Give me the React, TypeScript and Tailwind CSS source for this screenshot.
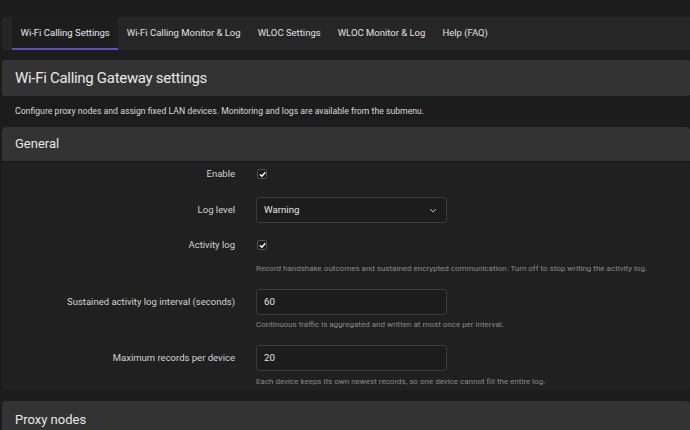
import React from "react";

const font = { fontFamily: "Roboto, 'Open Sans', Arial, sans-serif" };

function Check() {
  return (
    <div className="w-[10px] h-[10px] rounded-[2.5px] border border-[#555555] bg-[#1a1a1a] flex items-center justify-center">
      <svg width="7" height="7" viewBox="0 0 10 10">
        <path d="M1.8 5.4 L4.2 7.6 L8.4 2.6" fill="none" stroke="#fff" strokeWidth="2" strokeLinecap="round" strokeLinejoin="round" />
      </svg>
    </div>
  );
}

function Label({ children }: { children: React.ReactNode }) {
  return <div className="w-[233px] shrink-0 text-right text-[9.5px] text-[#d2d2d2]">{children}</div>;
}

function Helper({ children, mt }: { children: React.ReactNode; mt: string }) {
  return (
    <div className={`flex ${mt}`}>
      <div className="w-[254px] shrink-0" />
      <div className="text-[8px] leading-[12px] text-[#8a8a8a]">{children}</div>
    </div>
  );
}

function Input({ value }: { value: string }) {
  return (
    <div className="w-[191px] h-[26px] rounded-[3px] border border-[#3c3c3c] bg-[#1c1c1c] flex items-center pl-[7px] text-[9.7px] text-[#e4e4e4]">
      {value}
    </div>
  );
}

export default function App() {
  const tabs = [
    "Wi-Fi Calling Settings",
    "Wi-Fi Calling Monitor & Log",
    "WLOC Settings",
    "WLOC Monitor & Log",
    "Help (FAQ)",
  ];
  return (
    <div className="w-[690px] h-[430px] overflow-hidden bg-[#1c1c1c] pl-[2px]" style={font}>
      <div className="pt-[17px]">
        <div className="h-[33px] bg-[#262626] rounded-l-[3px] flex pl-[10px]">
          {tabs.map((t, i) => (
            <div
              key={t}
              className={
                i === 0
                  ? "h-full flex items-center px-[8.5px] bg-[#1d1d1d] border-b-2 border-[#5a4ec2] text-[9.5px] text-[#e8e8e8] pt-[2px]"
                  : "h-full flex items-center px-[8.5px] text-[9.5px] text-[#e0e0e0]"
              }
            >
              {t}
            </div>
          ))}
        </div>
      </div>

      <div className="mt-[10px] h-[36px] bg-[#333333] rounded-[3px] flex items-center pl-[13px] text-[15px] tracking-[-0.3px] text-[#e8e8e8]">
        Wi-Fi Calling Gateway settings
      </div>

      <div className="h-[31px] flex items-center pl-[13px] text-[8.7px] text-[#d8d8d8]">
        Configure proxy nodes and assign fixed LAN devices. Monitoring and logs are available from the submenu.
      </div>

      <div className="rounded-[4px] bg-[#202020] overflow-hidden">
        <div className="h-[34px] bg-[#333333] flex items-center pl-[13px] text-[13px] text-[#e8e8e8] shadow-[0_1px_2px_rgba(0,0,0,0.4)]">
          General
        </div>
        <div className="pb-[2px]">
          <div className="flex items-center h-[26px]">
            <Label>Enable</Label>
            <div className="ml-[22px]"><Check /></div>
          </div>
          <div className="flex items-center h-[26px] mt-[10px]">
            <Label>Log level</Label>
            <div className="ml-[21px] w-[191px] h-[26px] rounded-[3px] border border-[#3c3c3c] bg-[#1c1c1c] flex items-center justify-between pl-[7px] pr-[9px] text-[9.7px] text-[#e4e4e4]">
              <span>Warning</span>
              <svg width="8" height="5" viewBox="0 0 8 5">
                <path d="M1 1 L4 4 L7 1" fill="none" stroke="#bbb" strokeWidth="1" />
              </svg>
            </div>
          </div>
          <div className="flex items-center h-[26px] mt-[9px]">
            <Label>Activity log</Label>
            <div className="ml-[22px]"><Check /></div>
          </div>
          <Helper mt="mt-[5px]">
            Record handshake outcomes and sustained encrypted communication. Turn off to stop writing the activity log.
          </Helper>
          <div className="flex items-center h-[26px] mt-[14px]">
            <Label>Sustained activity log interval (seconds)</Label>
            <div className="ml-[21px]"><Input value="60" /></div>
          </div>
          <Helper mt="mt-[4px]">Continuous traffic is aggregated and written at most once per interval.</Helper>
          <div className="flex items-center h-[26px] mt-[14px]">
            <Label>Maximum records per device</Label>
            <div className="ml-[21px]"><Input value="20" /></div>
          </div>
          <Helper mt="mt-[5px]">Each device keeps its own newest records, so one device cannot fill the entire log.</Helper>
        </div>
      </div>

      <div className="mt-[11px] h-[40px] bg-[#333333] rounded-t-[4px] flex items-start pt-[9px] pl-[13px] text-[13px] text-[#e8e8e8]">
        Proxy nodes
      </div>
    </div>
  );
}
